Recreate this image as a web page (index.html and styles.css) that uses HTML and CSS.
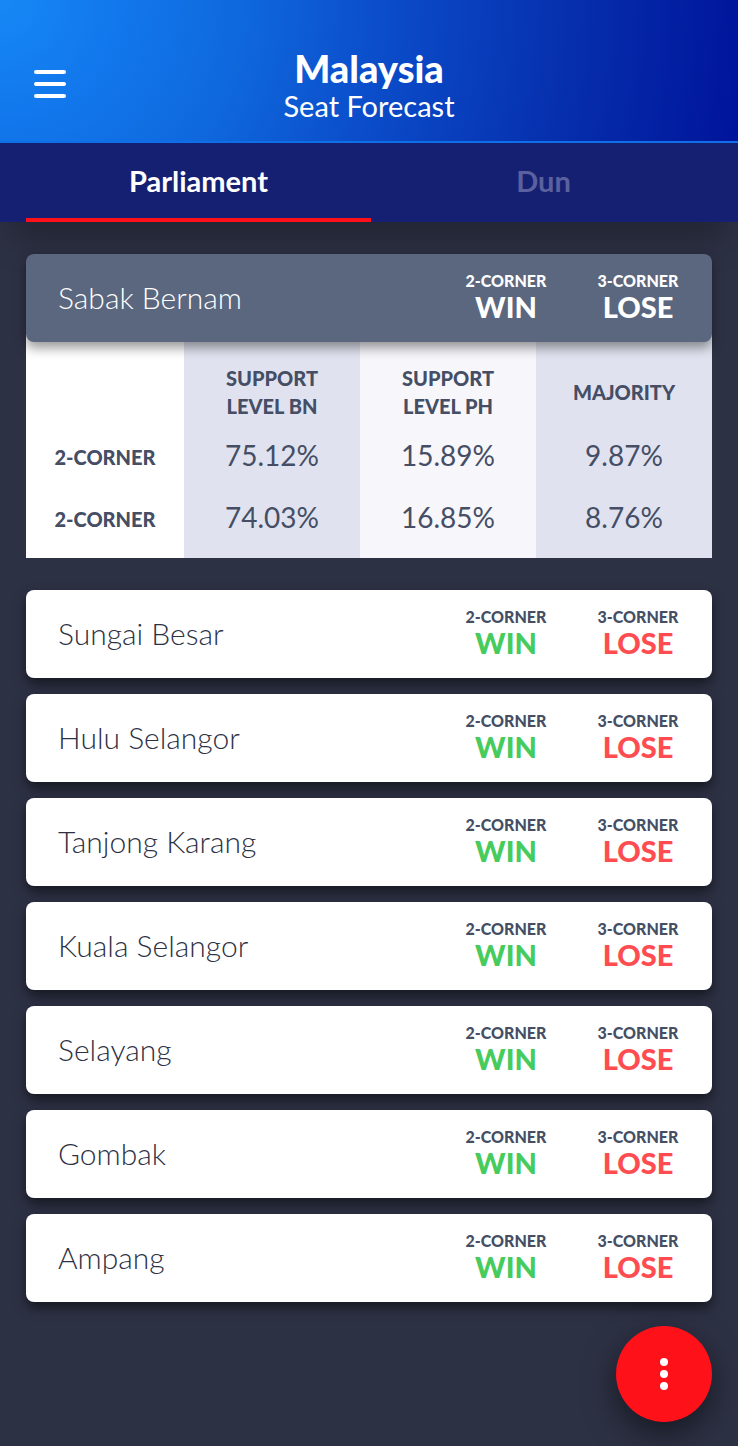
FILE: index.html
```html
<!DOCTYPE html>
<html lang="en">
<head>
<meta charset="utf-8">
<meta name="viewport" content="width=device-width, initial-scale=1">
<title>Malaysia Seat Forecast</title>
<link rel="stylesheet" href="styles.css">
</head>
<body>
<header class="header">
  <button class="menu" type="button" aria-label="Menu">
    <svg width="32" height="28" viewBox="0 0 32 28"><rect width="32" height="4" rx="2"/><rect y="12" width="32" height="4" rx="2"/><rect y="24" width="32" height="4" rx="2"/></svg>
  </button>
  <div class="heading">
    <h1 class="title">Malaysia</h1>
    <p class="subtitle">Seat Forecast</p>
  </div>
</header>
<nav class="tabs">
  <a class="tab active" href="#parliament">Parliament</a>
  <a class="tab" href="#dun">Dun</a>
</nav>
<main class="seats">
  <section class="open-seat">
    <button class="seat selected" type="button" aria-expanded="true">
      <span class="name">Sabak Bernam</span>
      <span class="result"><span class="label">2-CORNER</span><span class="win">WIN</span></span>
      <span class="result"><span class="label">3-CORNER</span><span class="lose">LOSE</span></span>
    </button>
    <table class="details">
      <thead>
        <tr><td></td><th scope="col">SUPPORT<br>LEVEL BN</th><th scope="col">SUPPORT<br>LEVEL PH</th><th scope="col">MAJORITY</th></tr>
      </thead>
      <tbody>
        <tr><th scope="row">2-CORNER</th><td>75.12%</td><td>15.89%</td><td>9.87%</td></tr>
        <tr><th scope="row">2-CORNER</th><td>74.03%</td><td>16.85%</td><td>8.76%</td></tr>
      </tbody>
    </table>
  </section>
  <button class="seat" type="button">
    <span class="name">Sungai Besar</span>
    <span class="result"><span class="label">2-CORNER</span><span class="win">WIN</span></span>
    <span class="result"><span class="label">3-CORNER</span><span class="lose">LOSE</span></span>
  </button>
  <button class="seat" type="button">
    <span class="name">Hulu Selangor</span>
    <span class="result"><span class="label">2-CORNER</span><span class="win">WIN</span></span>
    <span class="result"><span class="label">3-CORNER</span><span class="lose">LOSE</span></span>
  </button>
  <button class="seat" type="button">
    <span class="name">Tanjong Karang</span>
    <span class="result"><span class="label">2-CORNER</span><span class="win">WIN</span></span>
    <span class="result"><span class="label">3-CORNER</span><span class="lose">LOSE</span></span>
  </button>
  <button class="seat" type="button">
    <span class="name">Kuala Selangor</span>
    <span class="result"><span class="label">2-CORNER</span><span class="win">WIN</span></span>
    <span class="result"><span class="label">3-CORNER</span><span class="lose">LOSE</span></span>
  </button>
  <button class="seat" type="button">
    <span class="name">Selayang</span>
    <span class="result"><span class="label">2-CORNER</span><span class="win">WIN</span></span>
    <span class="result"><span class="label">3-CORNER</span><span class="lose">LOSE</span></span>
  </button>
  <button class="seat" type="button">
    <span class="name">Gombak</span>
    <span class="result"><span class="label">2-CORNER</span><span class="win">WIN</span></span>
    <span class="result"><span class="label">3-CORNER</span><span class="lose">LOSE</span></span>
  </button>
  <button class="seat" type="button">
    <span class="name">Ampang</span>
    <span class="result"><span class="label">2-CORNER</span><span class="win">WIN</span></span>
    <span class="result"><span class="label">3-CORNER</span><span class="lose">LOSE</span></span>
  </button>
</main>
<button class="fab" type="button" aria-label="More options">
  <svg width="8" height="32" viewBox="0 0 8 32"><circle cx="4" cy="4" r="4"/><circle cx="4" cy="16" r="4"/><circle cx="4" cy="28" r="4"/></svg>
</button>
</body>
</html>
```
FILE: styles.css
```css
* {
  box-sizing: border-box;
}

body {
  margin: 0;
  min-height: 100vh;
  background: #2d3144;
  color: #454e65;
  font-family: Lato, "Open Sans", sans-serif;
}

button {
  border: 0;
  font: inherit;
  cursor: pointer;
}

svg {
  display: block;
  fill: #fff;
}

.header {
  display: grid;
  grid-template-columns: 64px 1fr 64px;
  align-items: center;
  padding: 46px 18px 19px;
  border-bottom: 2px solid #0f6fe8;
  background: radial-gradient(circle farthest-corner at 0 0, #1688f6 0%, #1277ec 16%, #0f67dc 33%, #0b4ecb 50%, #0630ae 75%, #00149a 100%);
  color: #fff;
}

.menu {
  padding: 16px;
  background: none;
}

.heading {
  text-align: center;
}

.title {
  margin: 0;
  font-size: 38px;
  font-weight: 900;
  line-height: 44px;
}

.subtitle {
  margin: 0;
  font-size: 29px;
  line-height: 32px;
}

.tabs {
  position: relative;
  display: flex;
  padding: 0 22px 0 26px;
  background: #162073;
  box-shadow: 0 30px 32px -12px rgba(0, 0, 0, 0.25);
}

.tab {
  flex: 1;
  padding-top: 2px;
  padding-bottom: 2px;
  border-bottom: 4px solid transparent;
  color: #5b619e;
  font-size: 29px;
  font-weight: 700;
  line-height: 71px;
  text-align: center;
  text-decoration: none;
}

.tab.active {
  border-color: #ff111a;
  color: #fff;
}

.seats {
  display: flex;
  flex-direction: column;
  gap: 16px;
  padding: 32px 26px 144px;
}

.open-seat {
  margin-bottom: 16px;
}

.seat {
  display: flex;
  align-items: center;
  width: 100%;
  height: 88px;
  padding: 0 8px 2px 32px;
  border-radius: 8px;
  background: #fff;
  box-shadow: 0 6px 12px rgba(0, 0, 0, 0.5);
  color: #454e65;
  text-align: center;
}

.selected {
  position: relative;
  background: #5a677f;
  box-shadow: 0 6px 12px rgba(0, 0, 0, 0.4);
  color: #fff;
}

.name {
  flex: 1;
  color: #2d3144;
  font-size: 30px;
  font-weight: 300;
  text-align: left;
}

.result {
  display: flex;
  flex-direction: column;
  width: 132px;
  font-size: 16px;
  font-weight: 900;
  line-height: 20px;
}

.win,
.lose {
  font-size: 29px;
  line-height: 32px;
}

.win {
  color: #46cb5d;
}

.lose {
  color: #ff4c50;
}

.selected .name,
.selected .win,
.selected .lose {
  color: #fff;
}

.details {
  width: 100%;
  margin-top: -8px;
  border-collapse: collapse;
  table-layout: fixed;
  background: #fff;
  text-align: center;
}

.details th,
.details td {
  width: 176px;
  height: 62px;
  padding: 0;
}

.details tr > :first-child {
  width: 158px;
}

.details th {
  font-size: 20px;
  font-weight: 900;
  line-height: 28px;
}

.details tbody td {
  padding-bottom: 4px;
  font-size: 28px;
}

.details thead th,
.details thead td {
  height: 92px;
  padding-top: 24px;
}

.details tbody tr:last-child > * {
  height: 70px;
  padding-bottom: 8px;
}

.details tbody tr:last-child > td {
  padding-bottom: 12px;
}

.details tr > :nth-child(even) {
  background: #e0e3ef;
}

.details tr > :nth-child(3) {
  background: #f7f6fb;
}

.fab {
  position: fixed;
  right: 26px;
  bottom: 24px;
  display: grid;
  place-items: center;
  width: 96px;
  height: 96px;
  padding: 0;
  border-radius: 50%;
  background: #ff111a;
  box-shadow: 0 12px 32px rgba(0, 0, 0, 0.5);
}
```
